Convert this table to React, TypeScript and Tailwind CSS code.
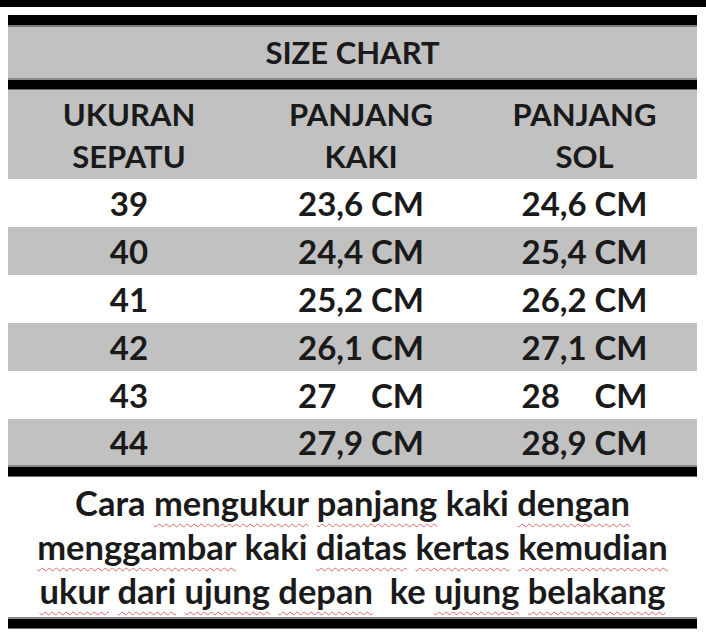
import React from "react";

type Row = { size: string; kaki: string; sol: string; shaded: boolean };

const ROWS: Row[] = [
  { size: "39", kaki: "23,6", sol: "24,6", shaded: false },
  { size: "40", kaki: "24,4", sol: "25,4", shaded: true },
  { size: "41", kaki: "25,2", sol: "26,2", shaded: false },
  { size: "42", kaki: "26,1", sol: "27,1", shaded: true },
  { size: "43", kaki: "27", sol: "28", shaded: false },
  { size: "44", kaki: "27,9", sol: "28,9", shaded: true },
];

const font = { fontFamily: "Lato, 'Open Sans', 'Liberation Sans', sans-serif" };

function Measure({ value }: { value: string }) {
  return (
    <div className="w-[126px] flex justify-between">
      <span>{value}</span>
      <span>CM</span>
    </div>
  );
}

function Rule() {
  return (
    <div>
      <div className="h-[2px] bg-[#8a8a8a]" />
      <div className="h-[9px] bg-black" />
      <div className="h-[1px] bg-[#6f6f6f]" />
    </div>
  );
}

// red squiggle like a spell checker
function W({ children }: { children: React.ReactNode }) {
  return (
    <span className="underline decoration-wavy decoration-[#e06666] decoration-1 underline-offset-[7px]">
      {children}
    </span>
  );
}

export default function App() {
  return (
    <div className="w-[706px] h-[640px] bg-white text-[#1a1a1a] font-bold overflow-hidden" style={font}>
      <div className="h-[7px] bg-black" />
      <div className="ml-[8px] w-[689px] mt-[8px]">
        <div className="h-[10px] bg-black" />
        <div className="h-[2px] bg-[#7c7c7c]" />
        <div className="h-[51px] bg-[#c1c1c1] flex items-center justify-center text-[31px] leading-none">
          SIZE CHART
        </div>
        <Rule />
        <div className="h-[89px] bg-[#c1c1c1] grid grid-cols-[242px_222px_1fr] text-[31px] leading-[42px] text-center content-center">
          <div>UKURAN<br />SEPATU</div>
          <div>PANJANG<br />KAKI</div>
          <div>PANJANG<br />SOL</div>
        </div>
        {ROWS.map((r, i) => (
          <div
            key={r.size}
            className={`grid grid-cols-[242px_222px_1fr] items-center text-[33px] leading-none ${
              i === ROWS.length - 1 ? "h-[46px]" : "h-[48px]"
            } ${r.shaded ? "bg-[#c1c1c1]" : "bg-white"}`}
          >
            <div className="text-center">{r.size}</div>
            <div className="flex justify-center">
              <Measure value={r.kaki} />
            </div>
            <div className="flex justify-center">
              <Measure value={r.sol} />
            </div>
          </div>
        ))}
        <Rule />
        <div className="h-[140px] flex flex-col items-center justify-center text-[34.5px] leading-[44px] whitespace-pre">
          <div>
            Cara <W>mengukur</W> <W>panjang</W> kaki <W>dengan</W>
          </div>
          <div>
            <W>menggambar</W> kaki <W>diatas</W> <W>kertas</W> <W>kemudian</W>
          </div>
          <div>
            <W>ukur</W> <W>dari</W> <W>ujung</W> <W>depan</W>{"  "}ke <W>ujung</W> <W>belakang</W>
          </div>
        </div>
        <Rule />
      </div>
    </div>
  );
}
